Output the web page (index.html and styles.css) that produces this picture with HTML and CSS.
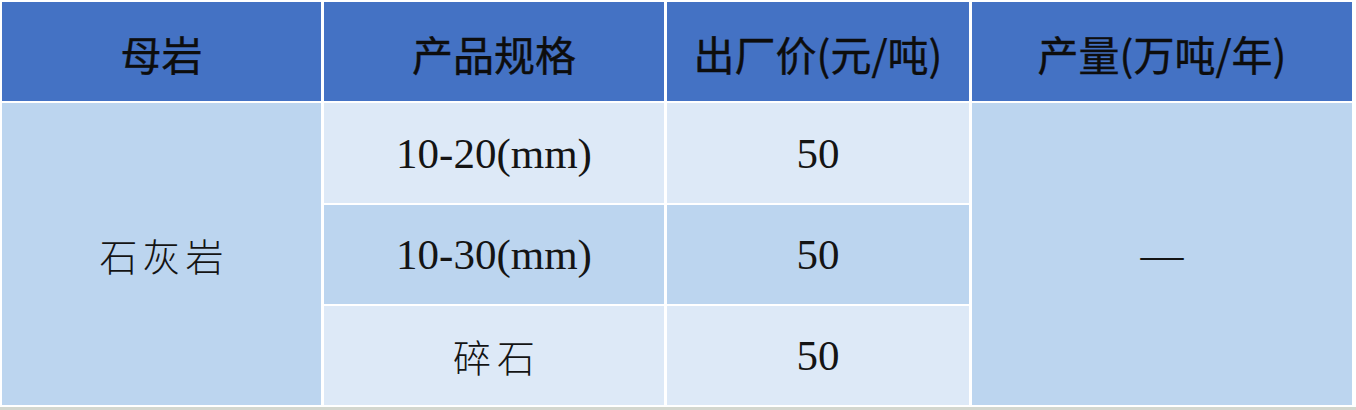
FILE: index.html
```html
<!DOCTYPE html>
<html lang="zh">
<head>
<meta charset="utf-8">
<title>石灰岩产品价格</title>
<link rel="stylesheet" href="styles.css">
</head>
<body>
<div class="sheet">
  <div class="table">
    <div class="cell head">母岩</div>
    <div class="cell head">产品规格</div>
    <div class="cell head">出厂价(元/吨)</div>
    <div class="cell head">产量(万吨/年)</div>

    <div class="cell side rock">石灰岩</div>
    <div class="cell light num">10-20(mm)</div>
    <div class="cell light num">50</div>
    <div class="cell side output num">—</div>

    <div class="cell mid num">10-30(mm)</div>
    <div class="cell mid num">50</div>

    <div class="cell light cjk">碎石</div>
    <div class="cell light num">50</div>
  </div>
  <div class="foot"></div>
</div>
</body>
</html>
```

FILE: styles.css
```css
html, body {
  margin: 0;
  padding: 0;
  background: #ffffff;
}

.sheet {
  width: 1356px;
  height: 410px;
  display: flex;
  flex-direction: column;
  overflow: hidden;
}

.table {
  display: grid;
  grid-template-columns: 319px 340px 302px 380px;
  grid-template-rows: 99px 100px 99px 99px;
  column-gap: 3px;
  row-gap: 2px;
  padding: 2px 0 0 2px;
}

.cell {
  display: flex;
  align-items: center;
  justify-content: center;
  color: #141414;
}

.head {
  background: #4472c4;
  font-family: "Noto Sans CJK SC", "Noto Sans", sans-serif;
  font-weight: 400;
  font-size: 41px;
  color: #0d0d0d;
  padding-top: 2px;
  -webkit-text-stroke: 0.4px #0d0d0d;
}

.side {
  background: #bcd5ef;
  grid-row: 2 / span 3;
}

.rock {
  grid-column: 1;
  font-family: "Noto Sans CJK SC", sans-serif;
  font-weight: 300;
  font-size: 38px;
  letter-spacing: 5px;
  padding-left: 5px;
}

.output {
  grid-column: 4;
}

.light {
  background: #dde9f7;
}

.mid {
  background: #bcd5ef;
}

.num {
  font-family: "Liberation Serif", "Times New Roman", serif;
  font-size: 43px;
}

.cjk {
  font-family: "Noto Sans CJK SC", sans-serif;
  font-weight: 300;
  font-size: 38px;
  letter-spacing: 6px;
  padding-left: 6px;
}

.foot {
  margin-top: 2px;
  height: 3px;
  background: #d3d7cf;
}
```
